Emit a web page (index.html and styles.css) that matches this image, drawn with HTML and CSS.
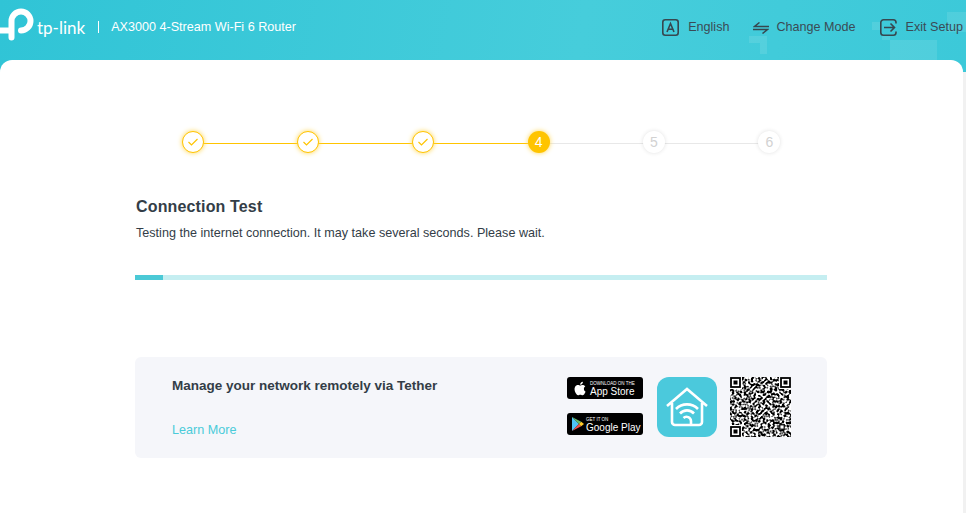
FILE: index.html
```html
<!DOCTYPE html>
<html lang="en">

<head>
    <meta charset="UTF-8">
    <title>Quick Setup</title>
    <link rel="stylesheet" href="styles.css">
</head>

<body>
    <header class="header">
        <span class="deco deco--corner"></span>
        <span class="deco deco--big"></span>
        <span class="deco deco--top"></span>
        <span class="deco deco--dot"></span>
        <span class="deco deco--dot2"></span>
        <div class="brand">
            <svg class="brand__mark" viewBox="0 0 36 54" width="36" height="54">
                <path d="M11.500 37.500V21A9.500 9.500 0 1 1 21 30.500" fill="none" stroke="#fff" stroke-width="6" stroke-linecap="round"/>
                <path d="M0 30.500H14" fill="none" stroke="#fff" stroke-width="6"/>
            </svg>
            <span class="brand__name">tp-link</span>
            <span class="brand__sep"></span>
            <span class="brand__model">AX3000 4-Stream Wi-Fi 6 Router</span>
        </div>
        <nav class="tools">
            <a class="tool tool--lang">
                <svg viewBox="0 0 17 17" width="17" height="17">
                    <rect x=".8" y=".8" width="15.400" height="15.400" rx="2.500" fill="none" stroke="#37474f" stroke-width="1.600"/>
                    <path d="M5 13 8.500 4.500 12 13M6.100 10.300h4.800" fill="none" stroke="#37474f" stroke-width="1.600"/>
                </svg>
                English
            </a>
            <a class="tool tool--mode">
                <svg viewBox="0 0 16 12" width="16" height="12">
                    <path d="M16 4.500H1.500L6.500 .5M0 7.500h14.500l-5 4" fill="none" stroke="#37474f" stroke-width="1.500"/>
                </svg>
                Change Mode
            </a>
            <a class="tool tool--exit">
                <svg viewBox="0 0 17 17" width="17" height="17">
                    <path d="M16 4.500V3.500A2.700 2.700 0 0 0 13.300 .8H3.500A2.700 2.700 0 0 0 .8 3.500v10a2.700 2.700 0 0 0 2.700 2.700h9.800a2.700 2.700 0 0 0 2.700-2.700v-1" fill="none" stroke="#37474f" stroke-width="1.600"/>
                    <path d="M4 8.500h10.500M10.500 4.500l4 4-4 4" fill="none" stroke="#37474f" stroke-width="1.600"/>
                </svg>
                Exit Setup
            </a>
        </nav>
    </header>

    <main class="card">
        <ol class="steps">
            <li class="step step--done">
                <span class="step__dot"><svg viewBox="0 0 10 8" width="10" height="8"><path d="M.5 4 3.500 7 9.500 1" fill="none" stroke="#ffc400" stroke-width="1.200"/></svg></span>
            </li>
            <li class="step step--done">
                <span class="step__dot"><svg viewBox="0 0 10 8" width="10" height="8"><path d="M.5 4 3.500 7 9.500 1" fill="none" stroke="#ffc400" stroke-width="1.200"/></svg></span>
            </li>
            <li class="step step--done">
                <span class="step__dot"><svg viewBox="0 0 10 8" width="10" height="8"><path d="M.5 4 3.500 7 9.500 1" fill="none" stroke="#ffc400" stroke-width="1.200"/></svg></span>
            </li>
            <li class="step step--current"><span class="step__dot">4</span></li>
            <li class="step"><span class="step__dot">5</span></li>
            <li class="step"><span class="step__dot">6</span></li>
        </ol>

        <section class="test">
            <h2 class="test__title">Connection Test</h2>
            <p class="test__text">Testing the internet connection. It may take several seconds. Please wait.</p>
            <div class="progress"><div class="progress__bar"></div></div>
        </section>

        <section class="tether">
            <div class="tether__info">
                <h3 class="tether__title">Manage your network remotely via Tether</h3>
                <a class="tether__link">Learn More</a>
            </div>
            <div class="stores">
                <a class="store store--apple">
                    <svg class="store__icon" viewBox="0 0 14 17" width="12" height="15">
                        <path d="M11.500 9c0-2 1.600-2.900 1.700-3-1-1.400-2.400-1.600-2.900-1.600-1.200-.1-2.400.7-3 .7s-1.600-.7-2.600-.7C3.300 4.400 2 5.200 1.300 6.400c-1.400 2.400-.4 6 1 8 .7 1 1.500 2.100 2.500 2 1 0 1.400-.6 2.600-.6s1.500.6 2.600.6 1.800-1 2.400-2c.8-1.100 1.100-2.200 1.100-2.300 0 0-2-.8-2-3.100ZM9.600 3.100c.5-.7.900-1.600.8-2.600-.8 0-1.800.5-2.400 1.200-.5.600-1 1.600-.8 2.500.9.100 1.800-.4 2.400-1.100Z" fill="#fff"/>
                    </svg>
                    <span class="store__text">
                        <small>DOWNLOAD ON THE</small>
                        App Store
                    </span>
                </a>
                <a class="store store--play">
                    <svg class="store__icon" viewBox="0 0 13 15" width="12" height="14">
                        <path d="M0 0v15l7.500-7.500Z" fill="#4fc3f7"/>
                        <path d="M0 0l7.500 7.500L10 5Z" fill="#66bb6a"/>
                        <path d="M0 15l7.500-7.500L10 10Z" fill="#ef5350"/>
                        <path d="M10 5l3 2.500-3 2.500-2.500-2.500Z" fill="#ffca28"/>
                    </svg>
                    <span class="store__text">
                        <small>GET IT ON</small>
                        Google Play
                    </span>
                </a>
            </div>
            <div class="app-icon">
                <svg viewBox="0 0 60 60" width="60" height="60">
                    <path d="M10 29 30 12l20 17M15 26v19a3 3 0 0 0 3 3h24a3 3 0 0 0 3-3V26" fill="none" stroke="#fff" stroke-width="2.600"/>
                    <path d="M19 32a15.500 15.500 0 0 1 22 0M23 36.500a9.500 9.500 0 0 1 14 0" fill="none" stroke="#fff" stroke-width="2.600"/>
                    <path d="M26.500 41a4.500 4.500 0 0 1 7.500 3v4" fill="none" stroke="#fff" stroke-width="2.600"/>
                </svg>
            </div>
            <svg class="qr" viewBox="0 0 61 60" width="61" height="60">
                <filter id="qr-noise" x="0" y="0" width="100%" height="100%" color-interpolation-filters="sRGB">
                    <feTurbulence type="fractalNoise" baseFrequency="0.42" numOctaves="1" seed="7"/>
                    <feColorMatrix values="1 0 0 0 0 1 0 0 0 0 1 0 0 0 0 0 0 0 0 1"/>
                    <feComponentTransfer>
                        <feFuncR type="linear" slope="5" intercept="-2"/>
                        <feFuncG type="linear" slope="5" intercept="-2"/>
                        <feFuncB type="linear" slope="5" intercept="-2"/>
                    </feComponentTransfer>
                </filter>
                <rect width="61" height="60" filter="url(#qr-noise)"/>
                <g class="qr__finder">
                    <rect width="12" height="12" fill="#fff"/>
                    <rect x="1" y="1" width="9" height="9" fill="none" stroke="#000" stroke-width="1.800"/>
                    <rect x="3.500" y="3.500" width="4" height="4"/>
                </g>
                <g class="qr__finder" transform="translate(49 0)">
                    <rect width="12" height="12" fill="#fff"/>
                    <rect x="2" y="1" width="9" height="9" fill="none" stroke="#000" stroke-width="1.800"/>
                    <rect x="4.500" y="3.500" width="4" height="4"/>
                </g>
                <g class="qr__finder" transform="translate(0 48)">
                    <rect width="12" height="12" fill="#fff"/>
                    <rect x="1" y="2" width="9" height="9" fill="none" stroke="#000" stroke-width="1.800"/>
                    <rect x="3.500" y="4.500" width="4" height="4"/>
                </g>
                <rect x="49.800" y="47.800" width="4.400" height="4.400" fill="#fff" stroke="#000" stroke-width="1.200"/>
            </svg>
        </section>
    </main>
</body>

</html>
```

FILE: styles.css
```css
* {
    box-sizing: border-box;
}

html,
body {
    height: 100%;
}

body {
    margin: 0;
    display: flex;
    flex-direction: column;
    overflow: hidden;
    font-family: 'Liberation Sans', Arial, sans-serif;
    color: #333d47;
    background-color: #f1f1f1;
}

/* Cabecalho */
.header {
    position: relative;
    flex: none;
    display: flex;
    align-items: flex-start;
    justify-content: space-between;
    height: 72px;
    margin-bottom: -12px;
    background: linear-gradient(100deg, #30c4d6 0%, #46cddb 60%, #3cc9d9 100%);
    overflow: hidden;
}

.deco {
    position: absolute;
    background-color: rgba(255, 255, 255, 0.1);
}

.deco--corner {
    left: 749px;
    top: 36px;
    width: 18px;
    height: 18px;
    background-color: transparent;
    border-top: 7px solid rgba(255, 255, 255, 0.1);
    border-right: 7px solid rgba(255, 255, 255, 0.1);
}

.deco--big {
    left: 890px;
    top: 40px;
    width: 47px;
    height: 20px;
}

.deco--top {
    left: 947px;
    top: 12px;
    width: 19px;
    height: 20px;
}

.deco--dot {
    left: 872px;
    top: 22px;
    width: 8px;
    height: 8px;
}

.deco--dot2 {
    left: 882px;
    top: 36px;
    width: 8px;
    height: 4px;
}

.brand {
    position: relative;
    display: flex;
    align-items: center;
    height: 54px;
    color: #ffffff;
}

.brand__mark {
    flex: none;
}

.brand__name {
    margin-left: 1px;
    font-family: 'Lato', sans-serif;
    font-size: 17px;
}

.brand__sep {
    width: 1px;
    height: 12px;
    margin: 0 12px 0 13px;
    background-color: #ffffff;
}

.brand__model {
    font-size: 12.6px;
}

.tools {
    position: relative;
    display: flex;
    gap: 24px;
    margin-top: 18px;
    padding-right: 3px;
}

.tool {
    display: flex;
    align-items: center;
    height: 18px;
    font-size: 12.6px;
    line-height: 18px;
    color: #3b4a55;
}

.tool svg {
    flex: none;
    margin-top: 1px;
}

.tool--lang svg {
    margin-right: 9px;
}

.tool--mode svg {
    margin-right: 7px;
}

.tool--exit svg {
    margin-right: 9px;
}

/* Cartao */
.card {
    position: relative;
    flex: 1;
    width: 963px;
    padding: 71px 136px 0 135px;
    background-color: #ffffff;
    border-radius: 12px 12px 0 0;
}

.steps {
    display: flex;
    margin: 0;
    padding: 0;
    list-style: none;
}

.step {
    position: relative;
    flex: 1;
    display: flex;
    justify-content: center;
}

.step::before {
    content: "";
    position: absolute;
    top: 12px;
    left: -50%;
    width: 100%;
    height: 1px;
    background-color: #e8e8e8;
}

.step:first-child::before {
    display: none;
}

.step--done::before,
.step--current::before {
    background-color: #ffc400;
}

.step__dot {
    position: relative;
    z-index: 1;
    display: flex;
    align-items: center;
    justify-content: center;
    width: 22px;
    height: 22px;
    border-radius: 50%;
    font-size: 14px;
    color: #d2d2d2;
    background-color: #ffffff;
    box-shadow: 0 0 4px rgba(0, 0, 0, 0.12);
}

.step--done .step__dot {
    border: 1.500px solid #ffc400;
    box-shadow: 0 0 5px #ffd54f;
}

.step--current .step__dot {
    color: #ffffff;
    background-color: #ffc400;
    box-shadow: 0 0 5px #ffd54f;
}

.test {
    margin-top: 44px;
}

.test__title {
    margin: 0;
    padding-left: 1px;
    font-size: 16px;
    line-height: 20px;
    letter-spacing: 0.15px;
}

.test__text {
    margin: 6px 0 0;
    padding-left: 1px;
    font-size: 12.6px;
    line-height: 20px;
}

.progress {
    height: 5px;
    margin-top: 32px;
    background-color: #c5eef1;
}

.progress__bar {
    width: 28px;
    height: 100%;
    background-color: #4bc9d6;
}

/* Bloco do Tether */
.tether {
    display: flex;
    align-items: flex-start;
    height: 101px;
    margin-top: 77px;
    padding: 20px 36px 0 37px;
    background-color: #f5f6fa;
    border-radius: 6px;
}

.tether__info {
    display: flex;
    flex-direction: column;
    justify-content: space-between;
    width: 395px;
    height: 62px;
}

.tether__title {
    margin: 0;
    font-size: 13.500px;
    line-height: 18px;
}

.tether__link {
    font-size: 12.6px;
    line-height: 18px;
    color: #4acbd9;
}

.stores {
    display: flex;
    flex-direction: column;
    gap: 14px;
    width: 76px;
}

.store {
    display: flex;
    align-items: center;
    height: 22px;
    border-radius: 3px;
    color: #ffffff;
    background-color: #000000;
    font-size: 10px;
}

.store--apple {
    gap: 4px;
    padding-left: 7px;
}

.store--play {
    gap: 2px;
    padding-left: 5px;
}

.store__text {
    display: flex;
    flex-direction: column;
    padding-top: 1px;
    line-height: 10px;
    white-space: nowrap;
}

.store__text small {
    font-size: 4.500px;
    line-height: 6px;
}

.app-icon {
    width: 60px;
    height: 60px;
    margin-left: 14px;
    border-radius: 12px;
    background-color: #4bc9dc;
}

.qr {
    flex: none;
    margin-left: 13px;
}
```
